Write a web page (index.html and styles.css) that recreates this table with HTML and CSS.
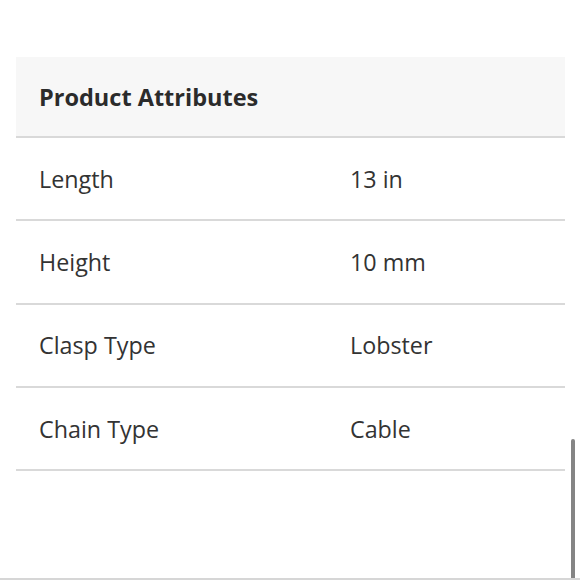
FILE: index.html
```html
<!DOCTYPE html>
<html>
<head>
<meta charset="utf-8">
<link rel="stylesheet" href="styles.css">
</head>
<body>
<div class="page">
  <section class="attrs">
    <div class="attrs-head">Product Attributes</div>
    <div class="attr-row"><span class="attr-name">Length</span><span class="attr-val">13 in</span></div>
    <div class="attr-row"><span class="attr-name">Height</span><span class="attr-val">10 mm</span></div>
    <div class="attr-row"><span class="attr-name">Clasp Type</span><span class="attr-val">Lobster</span></div>
    <div class="attr-row"><span class="attr-name">Chain Type</span><span class="attr-val">Cable</span></div>
  </section>
  <div class="scrollbar"></div>
  <div class="bottom-line"></div>
</div>
</body>
</html>
```

FILE: styles.css
```css
html, body {
  margin: 0;
  padding: 0;
  background: #fff;
}
body {
  font-family: "Open Sans", "Noto Sans", sans-serif;
  color: #333;
}
.page {
  position: relative;
  width: 580px;
  height: 580px;
  overflow: hidden;
  padding-top: 57px;
  box-sizing: border-box;
}
.attrs {
  margin-left: 16px;
  width: 549px;
}
.attrs-head {
  background: #f7f7f7;
  height: 79px;
  display: flex;
  align-items: center;
  padding-left: 23px;
  font-weight: 700;
  font-size: 23.5px;
  color: #2b2b2b;
  border-bottom: 2px solid #d9d9d9;
}
.attr-row {
  height: 81.3px;
  display: flex;
  align-items: center;
  border-bottom: 2px solid #d9d9d9;
  font-size: 23.3px;
  color: #333;
}
.attr-name {
  width: 311px;
  padding-left: 23px;
}
.attr-val {
  flex: 1;
}
.scrollbar {
  position: absolute;
  left: 571px;
  top: 439px;
  width: 4px;
  height: 150px;
  border-radius: 2px;
  background: #858585;
}
.bottom-line {
  position: absolute;
  left: 0;
  bottom: 0;
  width: 580px;
  height: 2px;
  background: #d6d6d6;
}
```
